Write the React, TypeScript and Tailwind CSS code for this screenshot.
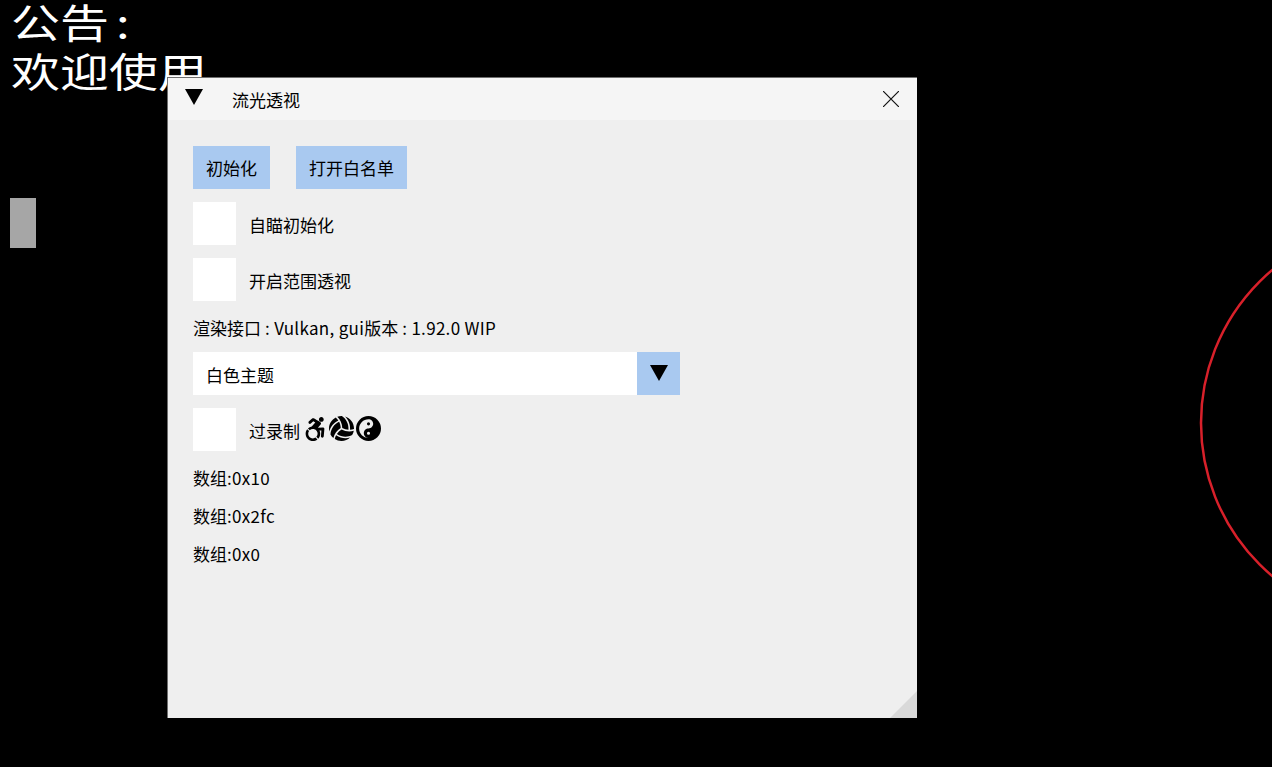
import { FaAccessibleIcon, FaVolleyball, FaYinYang } from 'react-icons/fa6';

const font = { fontFamily: '"Noto Sans CJK SC", "Noto Sans", sans-serif' };

function Arrow({ className }: { className: string }) {
  return (
    <svg viewBox="0 0 18 16" className={className}>
      <path d="M0 0H18L9 16Z" fill="#000" />
    </svg>
  );
}

function Check({ label, children }: { label: string; children?: React.ReactNode }) {
  return (
    <div className="flex items-center h-[43px]">
      <div className="w-[43px] h-[43px] bg-white" />
      <span className="ml-[13px] relative top-[1px]">{label}</span>
      {children}
    </div>
  );
}

// latin runs are a bit wider than the cjk font's own
function Latin({ children }: { children: React.ReactNode }) {
  return <span className="tracking-[0.3px]">{children}</span>;
}

export default function App() {
  return (
    <div
      className="relative w-[1272px] h-[767px] bg-black overflow-hidden text-[17px] leading-[24px] text-black"
      style={font}
    >
      {/* announcement behind the window */}
      <div className="absolute left-[11px] top-[-4px] text-white text-[49px] leading-[60px] origin-top-left scale-y-[0.82]">
        <div>
          公告<span className="ml-[7px]">:</span>
        </div>
        <div>欢迎使用</div>
      </div>

      <div className="absolute left-[10px] top-[198px] w-[26px] h-[50px] bg-[#a6a6a6]" />

      <svg className="absolute left-[1190px] top-[260px]" width="82" height="330" viewBox="1190 260 82 330">
        <circle cx="1401" cy="423" r="200" fill="none" stroke="#d8202a" strokeWidth="2.5" />
      </svg>

      {/* main window */}
      <div className="absolute left-[167px] top-[77px] w-[750px] h-[641px] bg-[#efefef] border border-[#6e6e6e] border-b-0 border-r-0">
        <div className="flex items-center h-[42px] bg-[#f5f5f5] pl-[17px] pr-[18px]">
          <Arrow className="w-[18px] h-[16px] relative top-[-2px]" />
          <span className="ml-[29px] relative top-[1px]">流光透视</span>
          <svg viewBox="0 0 16 16" className="ml-auto w-[16px] h-[16px]">
            <path d="M0 0L16 16M16 0L0 16" stroke="#111" strokeWidth="1.2" />
          </svg>
        </div>

        <div className="flex flex-col pl-[25px] pt-[26px]">
          <div className="flex gap-[26px]">
            <button className="h-[43px] w-[77px] bg-[#a9c9f0]">初始化</button>
            <button className="h-[43px] w-[111px] bg-[#a9c9f0]">打开白名单</button>
          </div>
          <div className="mt-[13px] flex flex-col gap-[13px]">
            <Check label="自瞄初始化" />
            <Check label="开启范围透视" />
          </div>
          <div className="mt-[15px] h-[24px]">
            渲染接口<Latin> : Vulkan, gui</Latin>版本<Latin> : 1.92.0 WIP</Latin>
          </div>
          <div className="mt-[12px] flex items-center w-[487px] h-[43px] bg-white">
            <span className="ml-[13px] relative top-[1px]">白色主题</span>
            <div className="ml-auto w-[43px] h-[43px] bg-[#a9c9f0] flex items-center justify-center">
              <Arrow className="w-[18px] h-[16px] relative top-[-1px]" />
            </div>
          </div>
          <div className="mt-[13px]">
            <Check label="过录制">
              <div className="ml-[3px] flex items-center gap-[2px] relative top-[-1px]">
                <FaAccessibleIcon className="w-[24px] h-[24px]" />
                <FaVolleyball className="w-[25px] h-[25px]" />
                <FaYinYang className="w-[25px] h-[25px]" />
              </div>
            </Check>
          </div>
          <div className="mt-[15px] flex flex-col gap-[14px]">
            <div>数组<Latin>:0x10</Latin></div>
            <div>数组<Latin>:0x2fc</Latin></div>
            <div>数组<Latin>:0x0</Latin></div>
          </div>
        </div>

        {/* resize grip */}
        <div className="absolute right-0 bottom-0 w-[27px] h-[27px] bg-[#d9d9d9] [clip-path:polygon(100%_0,100%_100%,0_100%)]" />
      </div>
    </div>
  );
}
